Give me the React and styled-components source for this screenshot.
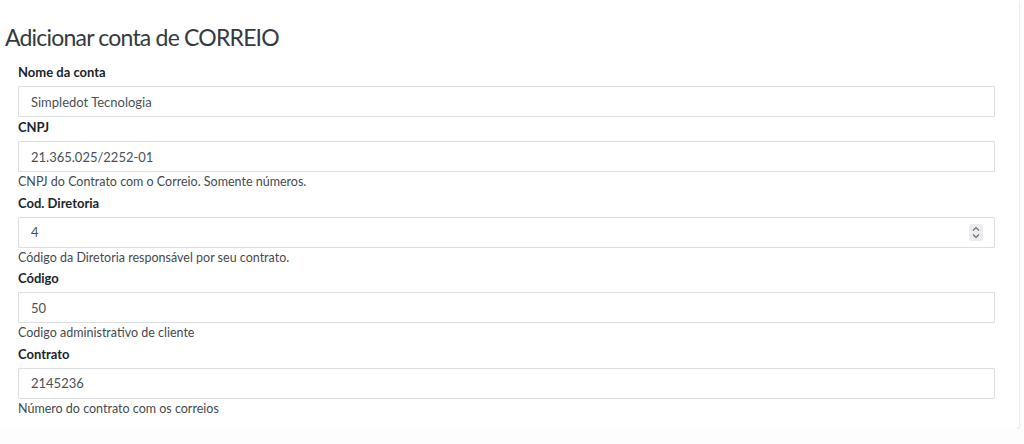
import React from "react";
import styled, { createGlobalStyle } from "styled-components";

const GlobalStyle = createGlobalStyle`
  html, body { margin: 0; padding: 0; background: #fdfdfd; }
  body { font-family: "Lato", "Noto Sans", sans-serif; color: #212529; }
  * { box-sizing: border-box; }
`;

const Card = styled.section`
  width: 1019px;
  background: #ffffff;
  border-radius: 0 0 4px 0;
  box-shadow: 0 0 1px rgba(0, 0, 0, 0.12), 0 1px 3px rgba(0, 0, 0, 0.12);
  padding: 0 24px 10px 18px;
`;

const Title = styled.h3`
  margin: 0 0 10px -13px;
  padding-top: 23px;
  font-size: 23px;
  letter-spacing: -0.8px;
  line-height: 29px;
  font-weight: 400;
  color: #343a40;
`;

const Group = styled.div`
  display: flex;
  flex-direction: column;
`;

const Label = styled.label`
  display: block;
  font-size: 13px;
  line-height: 21px;
  font-weight: 700;
  color: #212529;
  margin-bottom: 3px;
`;

const InputWrap = styled.div`
  position: relative;
`;

const Input = styled.input`
  display: block;
  width: 100%;
  height: 31px;
  padding: 0 12px;
  border: 1px solid #dadde1;
  border-radius: 1px;
  background: #fff;
  font-family: inherit;
  font-size: 13px;
  color: #495057;
  outline: none;
`;

const Help = styled.small`
  display: block;
  font-size: 12.5px;
  line-height: 20.5px;
  color: #444a50;
`;

const Spin = styled.div`
  position: absolute;
  right: 12px;
  top: 7px;
  width: 14px;
  height: 17px;
  background: #ececf0;
  border-radius: 2px;
  display: flex;
  align-items: center;
  justify-content: center;
`;

const fields = [
  { label: "Nome da conta", value: "Simpledot Tecnologia" },
  { label: "CNPJ", value: "21.365.025/2252-01", help: "CNPJ do Contrato com o Correio. Somente números." },
  { label: "Cod. Diretoria", value: "4", help: "Código da Diretoria responsável por seu contrato.", spin: true },
  { label: "Código", value: "50", help: "Codigo administrativo de cliente" },
  { label: "Contrato", value: "2145236", help: "Número do contrato com os correios" },
];

export default function App() {
  return (
    <>
      <GlobalStyle />
      <Card>
        <Title>Adicionar conta de CORREIO</Title>
        {fields.map((f) => (
          <Group key={f.label}>
            <Label>{f.label}</Label>
            <InputWrap>
              <Input type="text" defaultValue={f.value} readOnly />
              {f.spin && (
                <Spin>
                  <svg width="8" height="13" viewBox="0 0 8 13" fill="none" stroke="#6b6b70" strokeWidth="1.2">
                    <path d="M1 4.5 L4 1.5 L7 4.5" />
                    <path d="M1 8.5 L4 11.5 L7 8.5" />
                  </svg>
                </Spin>
              )}
            </InputWrap>
            {f.help && <Help>{f.help}</Help>}
          </Group>
        ))}
      </Card>
    </>
  );
}
